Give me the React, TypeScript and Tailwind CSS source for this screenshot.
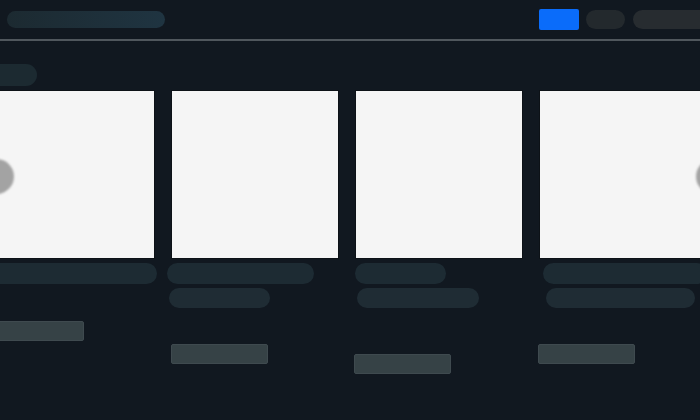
import React from 'react';

type Card = {
  line1: { ml: string; w: string };
  line2?: { ml: string; w: string };
  btn: { ml: string; mt: string };
};

const cards: Card[] = [
  { line1: { ml: 'ml-0', w: 'w-[170px]' }, btn: { ml: 'ml-0', mt: 'mt-[37px]' } },
  {
    line1: { ml: '-ml-[4px]', w: 'w-[147px]' },
    line2: { ml: '-ml-[2px]', w: 'w-[101px]' },
    btn: { ml: 'ml-0', mt: 'mt-[36px]' },
  },
  {
    line1: { ml: 'ml-0', w: 'w-[91px]' },
    line2: { ml: 'ml-[2px]', w: 'w-[122px]' },
    btn: { ml: '-ml-[1px]', mt: 'mt-[46px]' },
  },
  {
    line1: { ml: 'ml-[4px]', w: 'w-[164px]' },
    line2: { ml: 'ml-[7px]', w: 'w-[149px]' },
    btn: { ml: '-ml-[1px]', mt: 'mt-[36px]' },
  },
];

const SkeletonCard: React.FC<{ card: Card }> = ({ card }) => (
  <div className="flex flex-col w-[168px] shrink-0">
    <div className="h-[169px] w-full bg-[#f5f5f5] border border-[#0d1217]" />
    <div className={`mt-[4px] h-[21px] rounded-full bg-[#1d2b33] ${card.line1.ml} ${card.line1.w}`} />
    {card.line2 && (
      <div className={`mt-[4px] h-[20px] rounded-full bg-[#1f2c34] ${card.line2.ml} ${card.line2.w}`} />
    )}
    <div
      className={`h-[20px] w-[97px] rounded-[2px] bg-[#364246] border border-[#3f4a4f] ${card.btn.ml} ${card.btn.mt}`}
    />
  </div>
);

export default function App() {
  return (
    <div className="w-[700px] h-[420px] overflow-hidden bg-[#111820] font-['Liberation_Sans',sans-serif]">
      <header className="h-[41px] border-b-2 border-[#50575d] flex items-center">
        <div className="ml-[7px] h-[17px] w-[158px] rounded-full bg-gradient-to-r from-[#1c2a31] to-[#1f3441]" />
        <div className="ml-auto flex items-center gap-[7px] -mr-[8px]">
          <div className="h-[21px] w-[40px] rounded-[2px] bg-[#0a6cfa]" />
          <div className="h-[19px] w-[39px] rounded-full bg-[#23292d]" />
          <div className="ml-[1px] h-[19px] w-[75px] rounded-full bg-[#272c30]" />
        </div>
      </header>

      <section className="pt-[23px]">
        <div className="-ml-[13px] h-[22px] w-[50px] rounded-full bg-[#1c2a31]" />
        <div className="relative mt-[4px]">
          <div className="flex gap-4 -ml-[13px]">
            {cards.map((c, i) => (
              <SkeletonCard key={i} card={c} />
            ))}
          </div>
          <div className="absolute -left-[21px] top-[69px] h-[35px] w-[35px] rounded-full bg-[#a3a3a3] blur-[1px]" />
          <div className="absolute left-[696px] top-[69px] h-[35px] w-[35px] rounded-full bg-[#a3a3a3] blur-[1px]" />
        </div>
      </section>
    </div>
  );
}
